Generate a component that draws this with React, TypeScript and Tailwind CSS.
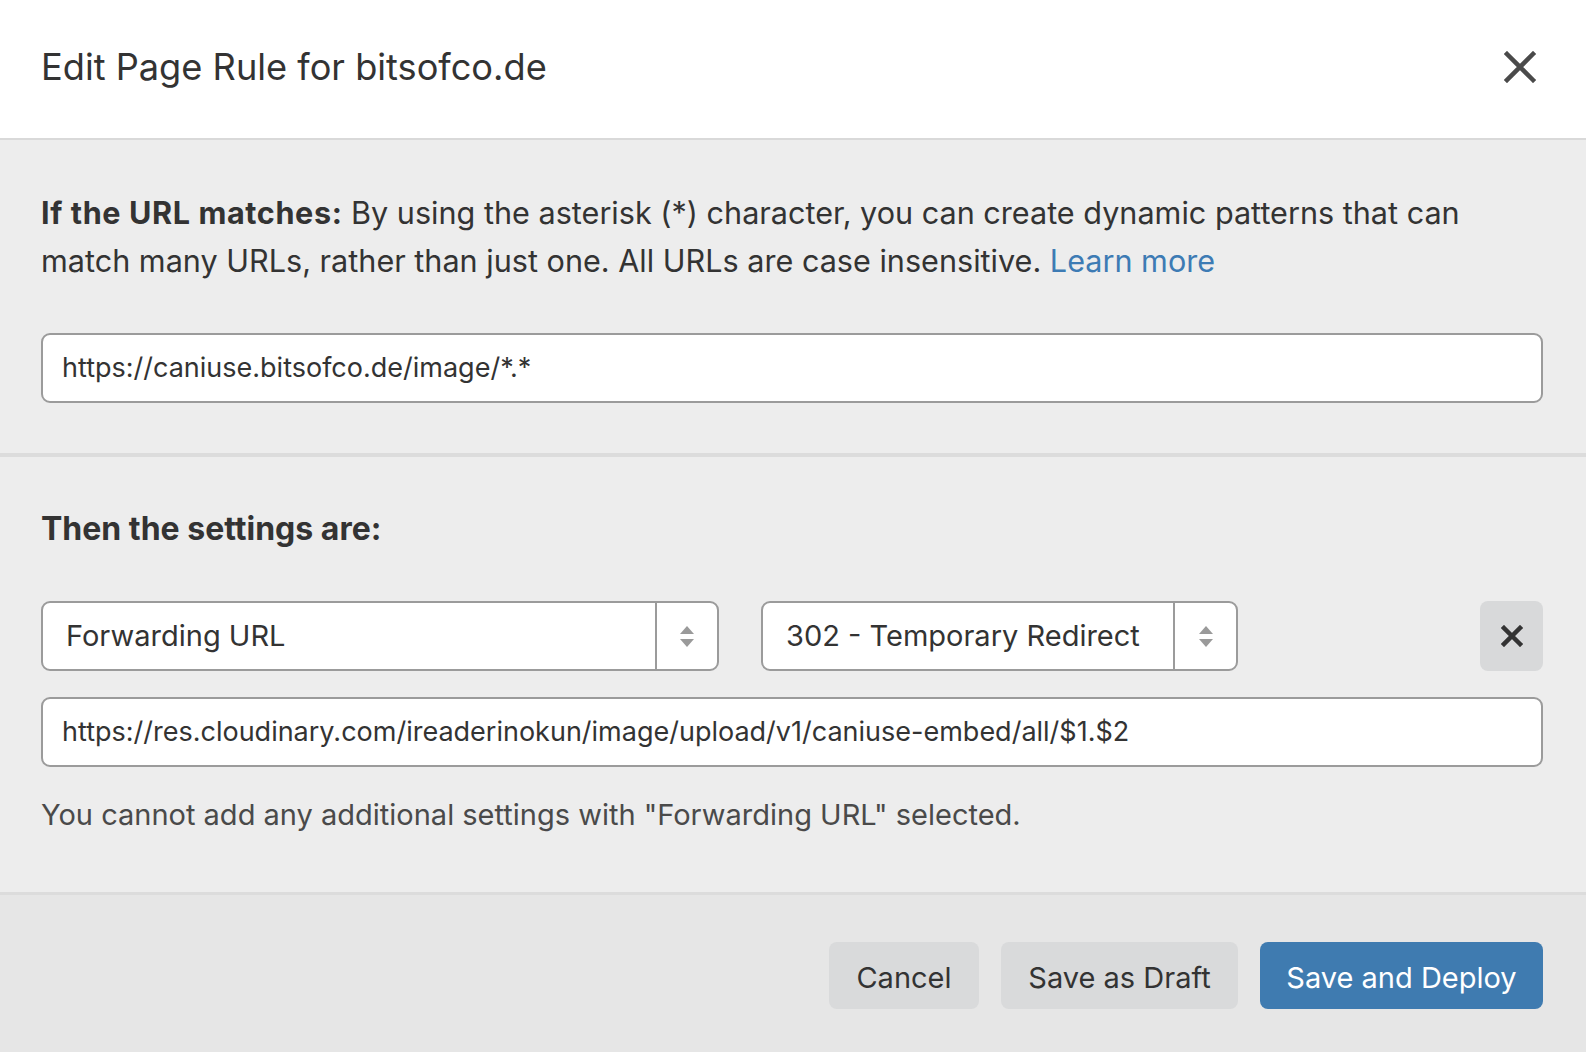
import React from 'react'

function SelectArrows() {
  return (
    <svg width="16" height="26" viewBox="0 0 16 26" className="text-[#9a9a9a]">
      <path d="M8 3 L15 11 L1 11 Z" fill="currentColor" />
      <path d="M1 16 L15 16 L8 24 Z" fill="currentColor" />
    </svg>
  )
}

function Select({ value, width, divider }: { value: string; width: string; divider: string }) {
  return (
    <div className={`flex h-[70px] ${width} items-stretch rounded-[9px] border-2 border-[#9b9b9b] bg-white`}>
      <div className={`flex ${divider} items-center border-r-2 border-[#9b9b9b] pl-[23px] text-[29px] text-[#333]`}>
        {value}
      </div>
      <div className="flex flex-1 items-center justify-center">
        <SelectArrows />
      </div>
    </div>
  )
}

export default function App() {
  return (
    <div className="min-h-[1052px] w-full bg-[#ededed] font-['Inter',sans-serif] text-[#333]">
      {/* header */}
      <div className="flex h-[140px] items-center justify-between border-b-2 border-[#d9d9d9] bg-white pl-[41px] pr-[50px]">
        <h1 className="pb-[4px] text-[36.2px] font-normal text-[#333]">Edit Page Rule for bitsofco.de</h1>
        <svg width="32" height="32" viewBox="0 0 32 32" className="mb-[4px]">
          <path d="M3 3 L29 29 M29 3 L3 29" stroke="#4a4a4a" strokeWidth="4.5" strokeLinecap="square" />
        </svg>
      </div>

      {/* url match */}
      <div className="border-b-[4px] border-[#dcdcdc] pb-[50px] pl-[41px] pr-[43px] pt-[49px]">
        <p className="text-[30.6px] leading-[48px]">
          <span className="font-bold tracking-[0.6px]">If the URL matches:</span> By using the asterisk (*) character, you can create
          dynamic patterns that can match many URLs, rather than just one. All URLs are case insensitive.{' '}
          <a className="text-[#3d7bb4]">Learn more</a>
        </p>
        <div className="mt-[48px] flex h-[70px] items-center rounded-[9px] border-2 border-[#9b9b9b] bg-white pl-[19px] text-[27px]">
          https://caniuse.bitsofco.de/image/*.*
        </div>
      </div>

      {/* settings */}
      <div className="border-b-[3px] border-[#dcdcdc] pb-[53px] pl-[41px] pr-[43px] pt-[48px]">
        <h2 className="text-[32px] font-bold leading-[48px]">Then the settings are:</h2>
        <div className="mt-[48px] flex items-center">
          <Select value="Forwarding URL" width="w-[678px]" divider="w-[614px]" />
          <div className="ml-[42px]">
            <Select value="302 - Temporary Redirect" width="w-[477px]" divider="w-[412px]" />
          </div>
          <button className="ml-auto flex h-[70px] w-[63px] items-center justify-center rounded-[8px] bg-[#d8d9da]">
            <svg width="22" height="22" viewBox="0 0 22 22">
              <path d="M3 3 L19 19 M19 3 L3 19" stroke="#333" strokeWidth="4.5" strokeLinecap="square" />
            </svg>
          </button>
        </div>
        <div className="mt-[26px] flex h-[70px] items-center rounded-[9px] border-2 border-[#9b9b9b] bg-white pl-[19px] text-[27px]">
          https://res.cloudinary.com/ireaderinokun/image/upload/v1/caniuse-embed/all/$1.$2
        </div>
        <p className="mt-[24px] text-[29px] leading-[48px] text-[#4a4a4a]">
          You cannot add any additional settings with "Forwarding URL" selected.
        </p>
      </div>

      {/* footer */}
      <div className="flex h-[157px] items-start justify-end gap-[22px] bg-[#e6e6e6] pr-[43px] pt-[47px]">
        <button className="h-[67px] w-[150px] rounded-[8px] bg-[#d9dadb] pt-[5px] text-[29px] text-[#333]">Cancel</button>
        <button className="h-[67px] w-[237px] rounded-[8px] bg-[#d9dadb] pt-[5px] text-[29px] text-[#333]">Save as Draft</button>
        <button className="h-[67px] w-[283px] rounded-[8px] bg-[#3f7bb0] pt-[5px] text-[29px] text-white">Save and Deploy</button>
      </div>
    </div>
  )
}
